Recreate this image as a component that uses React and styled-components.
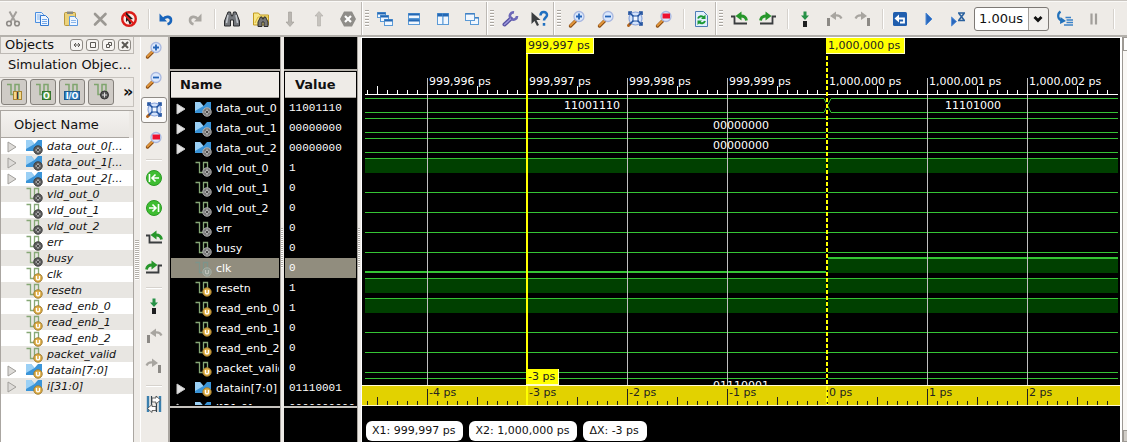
import React from "react";
import styled, { createGlobalStyle, css } from "styled-components";

const Global = createGlobalStyle`
  * { box-sizing: border-box; }
  body { margin: 0; background: #eeebe7; color: #111; font: 11px/16px "DejaVu Sans", sans-serif; }
  button { padding: 0; border: 0; background: none; font: inherit; color: inherit; }
  ul { list-style: none; margin: 0; padding: 0; }
  h2, h3 { margin: 0; font-weight: normal; }
  svg { display: block; flex: none; }
`;

const Window = styled.div`
  display: flex;
  flex-direction: column;
  height: 100vh;
  overflow: hidden;
`;

/* ---------- toolbars ---------- */
const Toolbar = styled.header`
  display: flex;
  flex: none;
  height: 37px;
  padding-top: 1px;
  border-bottom: 2px solid #b4b1ac;
  box-shadow: inset 0 1px #c9c5c0, inset 0 2px #faf9f7;
`;
const Group = styled.div`
  display: flex;
  align-items: center;
  gap: 3px;
  margin-top: 1px;
  ${(p) => p.$grip && css`
    border-left: 1px solid #bdb9b4;
    padding: 0 1px 0 3px;
    box-shadow: inset 1px 0 #fff;
  `}
`;
const Grip = styled.span`
  width: 4px;
  height: 18px;
  background: repeating-linear-gradient(#aaa6a0 0 1px, #fff 1px 2px, #eeebe7 2px 3px);
`;
const ToolButton = styled.button`
  display: grid;
  place-items: center;
  flex: none;
  width: 26px;
  height: 26px;
  border: 1px solid transparent;
  border-radius: 3px;
  ${(p) => p.$active && css`
    background: #fbfaf9;
    border-color: #8f8b86;
  `}
`;
const Separator = styled.span`
  flex: none;
  ${(p) => p.$row
    ? css`width: 16px; height: 4px; border-bottom: 1px solid #fff; box-shadow: inset 0 -1px #d6d2cd;`
    : css`width: 5px; height: 20px; border-right: 1px solid #fff; box-shadow: inset -1px 0 #d6d2cd;`}
`;
const Combo = styled.div`
  display: grid;
  width: 75px;
  height: 24px;
`;
const ComboSelect = styled.select`
  grid-area: 1 / 1;
  appearance: none;
  width: 100%;
  padding: 0 4px;
  border: 1px solid #7d7975;
  border-radius: 3px;
  background: linear-gradient(to right, #fff 53px, #a5a19c 53px 54px, #f1efec 54px);
  font: 13px/20px "DejaVu Sans", sans-serif;
  color: #111;
`;
const ComboArrow = styled.svg`
  grid-area: 1 / 1;
  place-self: center end;
  margin-right: 6px;
  pointer-events: none;
`;

/* ---------- body ---------- */
const Body = styled.main`
  display: flex;
  flex: 1;
  min-height: 0;
`;
const Dock = styled.aside`
  display: flex;
  flex-direction: column;
  flex: none;
  width: 134px;
`;
const DockTitle = styled.div`
  display: flex;
  align-items: center;
  gap: 3px;
  height: 17px;
  padding: 0 2px 0 4px;
  border: 1px solid #bdb9b4;
  border-top: 0;
`;
const DockHeading = styled.h2`
  flex: 1;
  font-size: 13px;
  line-height: 16px;
`;
const SmallButton = styled.button`
  display: grid;
  place-items: center;
  width: 13px;
  height: 12px;
  border: 1px solid #8d8984;
  border-radius: 3px;
  background: #f6f4f2;
`;
const SubHeading = styled.h3`
  padding: 2px 2px 2px 8px;
  height: 23px;
  font-size: 13px;
  line-height: 18px;
  white-space: nowrap;
`;
const Filters = styled.div`
  display: flex;
  align-items: center;
  gap: 3px;
  height: 30px;
  padding: 0 1px;
  border: 1px solid #c6c2bd;
  border-left: 0;
`;
const FilterButton = styled(ToolButton)`
  background: #cfcbc6;
  border-color: #85817c;
`;
const More = styled.button`
  flex: 1;
  padding-left: 6px;
  font-size: 16px;
  font-weight: bold;
  line-height: 20px;
`;
const ObjectBox = styled.div`
  display: flex;
  flex-direction: column;
  flex: 1;
  min-height: 0;
  margin-top: 3px;
  border: 1px solid #aaa6a1;
  border-bottom: 0;
  background: #fff;
`;
const ObjectHeader = styled.div`
  height: 27px;
  margin-right: 4px;
  padding: 0 13px;
  border-bottom: 1px solid #aaa6a1;
  background: linear-gradient(#f4f2ef, #e9e6e2);
  box-shadow: 4px 0 #ece9e5, 1px 0 #c6c2bd;
  font-size: 13px;
  line-height: 27px;
`;
const ObjectRow = styled.li`
  display: grid;
  grid-template-columns: 14px 18px 1fr;
  align-items: center;
  column-gap: 4px;
  height: 16px;
  padding-left: 6px;
  white-space: nowrap;
  font-style: italic;
  &:nth-child(even) { background: #e8e6e2; }
`;
const Splitter = styled.div`
  display: grid;
  place-items: center;
  flex: none;
  width: ${(p) => p.$w}px;
  background: linear-gradient(to right, #a9a5a0 1px, #eeebe7 1px);
  ${(p) => p.$plain && css`background: #eeebe7;`}
`;
const SplitGrip = styled.span`
  width: ${(p) => p.$w}px;
  height: 40px;
  margin-top: ${(p) => p.$drop || 0}px;
  background: repeating-linear-gradient(#b3afa9 0 1px, #fff 1px 2px);
`;
const SideBar = styled.nav`
  display: flex;
  flex-direction: column;
  align-items: center;
  gap: 4px;
  flex: none;
  width: 29px;
  padding: 0 1px 0 0;
  border-left: 1px solid #fff;
  border-right: 1px solid #a9a5a0;
`;

/* ---------- signal columns ---------- */
const Column = styled.section`
  display: flex;
  flex-direction: column;
  flex: none;
  width: ${(p) => p.$w}px;
  background: #000;
  color: #fff;
`;
const ColumnTop = styled.div`
  flex: none;
  height: 34px;
  border-bottom: 2px solid #b4b0aa;
`;
const ColumnHeader = styled.div`
  flex: none;
  height: 26px;
  margin: 1px 1px 0;
  padding-left: ${(p) => p.$pad}px;
  border-bottom: 1px solid #aaa6a1;
  background: #eeebe7;
  color: #111;
  font-size: 13px;
  font-weight: bold;
  line-height: 26px;
`;
const SignalList = styled.ul`
  flex: 1;
  min-height: 0;
  margin: 0 1px 1px;
  overflow: hidden;
`;
const ColumnFoot = styled.div`
  flex: none;
  height: 36px;
  border-top: 2px solid #c6c3be;
`;
const SignalRow = styled.li`
  display: grid;
  grid-template-columns: 14px 18px 1fr;
  align-items: center;
  column-gap: 4px;
  height: 20px;
  padding: 1px 0 0 5px;
  white-space: nowrap;
  background: ${(p) => (p.$selected ? "#918d7e" : "transparent")};
`;
const ValueRow = styled.li`
  height: 20px;
  padding-left: 4px;
  white-space: nowrap;
  font: 11px/20px "Liberation Mono", monospace;
  background: ${(p) => (p.$selected ? "#918d7e" : "transparent")};
`;

/* ---------- wave view ---------- */
const Wave = styled.section`
  display: flex;
  flex-direction: column;
  flex: 1;
  min-width: 0;
  border: 1px solid #fff;
  border-width: 1px 2px 0 1px;
  background: #000;
`;
const Plot = styled.svg`
  flex: 1;
  min-height: 0;
  width: calc(100% - 5px);
  margin-left: 3px;
  overflow: hidden;
`;
const Ruler = styled.div`
  flex: none;
  height: 21px;
  padding: 0 2px 0 3px;
  border: 1px solid #fffbd0;
  border-width: 1px 0;
  background: #e2d200;
`;
const Pills = styled.footer`
  display: flex;
  flex: none;
  gap: 6px;
  height: 36px;
  padding: 15px 4px 1px;
`;
const Pill = styled.output`
  padding: 0 8px 0 6px;
  border-radius: 6px;
  background: #fff;
  color: #111;
  line-height: 20px;
  white-space: nowrap;
`;
const ScrollBar = styled.div`
  display: flex;
  flex-direction: column;
  justify-content: space-between;
  flex: none;
  width: 5px;
  border-left: 1px solid #9d9994;
  background: #faf8f5;
`;
const ScrollButton = styled.button`
  height: ${(p) => p.$h}px;
  border: 1px solid #9d9994;
  border-right: 0;
  background: ${(p) => p.$bg};
`;

/* ---------- icons ---------- */
const Svg = ({ s = 20, children }) => (
  <svg width={s} height={s} viewBox="0 0 20 20" fill="none" aria-hidden="true">{children}</svg>
);
const Lens = ({ children }) => (
  <Svg>
    <path d="M9 11.5 3.5 17" stroke="#8a4a10" strokeWidth="3.4" strokeLinecap="round" />
    <path d="M8.5 11.5 3.5 16.5" stroke="#e2973c" strokeWidth="1.8" strokeLinecap="round" />
    <circle cx="12" cy="7.5" r="5" fill="#dce8fc" stroke="#a9b8e0" strokeWidth="1.3" />
    {children}
  </Svg>
);
const Pane = ({ x, y, w, h, bar = 2 }) => (
  <>
    <rect x={x} y={y} width={w} height={h} fill="#f1f7fe" stroke="#5b9ad6" />
    <rect x={x} y={y} width={w} height={bar} fill="#2468b4" />
  </>
);
const Icons = {
  cut: <Svg><path d="M6.5 2.5 12.5 13M13.5 2.5 7.5 13" stroke="#a3a09c" strokeWidth="2" /><circle cx="6" cy="14.5" r="2.3" stroke="#8d8a86" strokeWidth="1.6" /><circle cx="14" cy="14.5" r="2.3" stroke="#8d8a86" strokeWidth="1.6" /></Svg>,
  copy: <Svg><path d="M3.5 3.5h6l2 2v8h-8z" fill="#e6f0fd" stroke="#4a8ee0" /><path d="M5 6h4M5 8h4M5 10h3" stroke="#8ab6ea" /><path d="M8.5 6.500h5l3 3v7h-8z" fill="#eff6ff" stroke="#3378d0" /><path d="M10 10.5h5M10 12.5h5M10 14.5h5" stroke="#73a7e8" /></Svg>,
  paste: <Svg><rect x="3.5" y="3.5" width="11" height="13" rx="1" fill="#ecd27a" stroke="#b8973c" /><rect x="6" y="2.5" width="6" height="2.5" fill="#8a8a80" /><path d="M8.5 7.5h5l3 3v6h-8z" fill="#eff6ff" stroke="#5b98e0" /><path d="M10 11.5h5M10 13.5h5" stroke="#8ab6ea" /></Svg>,
  remove: <Svg><path d="m5 5 10.5 10.5M15.5 5 5 15.5" stroke="#9b9893" strokeWidth="2.6" strokeLinecap="round" /></Svg>,
  deny: <Svg><circle cx="10" cy="10" r="6.8" fill="#fbe9e6" stroke="#dc1c18" strokeWidth="2.4" /><path d="m7 3 7 7-3 .5 1.5 4-2 .8-1.500-4L7 13z" fill="#1b1b1b" /><path d="m5 5 10 10" stroke="#dc1c18" strokeWidth="2" /></Svg>,
  undo: <Svg><path d="M7 10c3-3.5 8-2.5 8 1.2 0 2-1 3.3-3.5 4" stroke="#1864bb" strokeWidth="2.6" /><path d="M3.5 4.500v8H11z" fill="#1864bb" /></Svg>,
  redo: <Svg><path d="M13 10c-3-3.5-8-2.5-8 1.2 0 2 1 3.3 3.5 4" stroke="#aaa7a2" strokeWidth="2.6" /><path d="M16.5 4.500v8H9z" fill="#aaa7a2" /></Svg>,
  find: <Svg><path d="M6 3h2.5l1 4h1l1-4H14l3.5 9v5h-6v-6h-3v6h-6v-5z" fill="#74777c" stroke="#2b2c2e" /><path d="M6 6 4.5 14M14 6l1.5 8" stroke="#c4c8ce" strokeWidth="1.5" /></Svg>,
  findFiles: <Svg><path d="M2.5 16V4h5l1.5 2h8.500v10z" fill="#f8e686" stroke="#c29b20" /><path d="M4 14 7 8h10" stroke="#d9b63c" /><path d="m9.500 8-2.500 5v4.500h4V13h2v4.500h4V13L14.500 8H13l-.5 2h-1L11 8z" fill="#777" stroke="#2c2c2c" /></Svg>,
  down: <Svg><path d="M8.5 3h3v10H14l-4 4.500L6 13h2.500z" fill="#b9b6b1" stroke="#9d9a95" strokeWidth=".6" /></Svg>,
  up: <Svg><path d="M8.5 17h3V7H14l-4-4.500L6 7h2.500z" fill="#c6c3be" stroke="#b0ada8" strokeWidth=".6" /></Svg>,
  stop: <Svg><path d="M6 2.500h8l4 7.500-4 7.500H6L2 10z" fill="#8f8d89" /><path d="m7 7 6 6m0-6-6 6" stroke="#fff" strokeWidth="2.2" /></Svg>,
  cascade: <Svg><Pane x={2.5} y={3.5} w={8} h={5} /><Pane x={5.5} y={6.5} w={8} h={6} /><Pane x={9.5} y={10.5} w={8} h={6} /></Svg>,
  tileH: <Svg><Pane x={4.5} y={4.500} w={11} h={5} /><Pane x={4.5} y={10.5} w={11} h={5} /></Svg>,
  tileV: <Svg><Pane x={4.5} y={4.5} w={5.5} h={11} bar={3} /><Pane x={10} y={4.5} w={5.5} h={11} bar={3} /></Svg>,
  layers: <Svg><Pane x={8.500} y={8.5} w={8} h={7} bar={1} /><Pane x={3.5} y={4.5} w={9} h={7} bar={1} /></Svg>,
  wrench: <Svg><path d="m4.500 15.500 6.500-6" stroke="#5550a0" strokeWidth="4" strokeLinecap="round" /><path d="M11 9.500a3.500 3.500 0 0 1 3-6M11.500 10a3.500 3.500 0 0 0 5.500-3" stroke="#6d68b8" strokeWidth="2.6" /><path d="m4.500 15.500 6-5.500" stroke="#9c98dc" strokeWidth="1.5" strokeLinecap="round" /></Svg>,
  help: <Svg><path d="M2.500 3v12l3-3 2.500 5 2-1-2.500-5h4z" fill="#3b3e40" /><path d="M11.500 6.500c0-4.500 6.500-4.500 6.500-.5 0 2.500-3 2.500-3 5.500M15 14v2.800" stroke="#2070c0" strokeWidth="2.500" /></Svg>,
  zoomIn: <Lens><path d="M12 4.500v6M9 7.500h6" stroke="#2464b8" strokeWidth="1.8" /></Lens>,
  zoomOut: <Lens><path d="M9 7.500h6" stroke="#2464b8" strokeWidth="1.8" /></Lens>,
  zoomSel: <Lens><rect x="8.500" y="4.500" width="7.500" height="5" fill="#ee1030" /></Lens>,
  zoomFit: <Svg><path d="M6.500 13.500 3.500 16.500" stroke="#b5651d" strokeWidth="3" strokeLinecap="round" /><circle cx="10.500" cy="9.500" r="6.500" fill="#d5e4fb" stroke="#8aa5dc" strokeWidth="1.2" /><path d="m4.500 3.500 12 12m0-12-12 12" stroke="#1d4f9e" strokeWidth="1.500" /><path d="M4 6V3h3M14 3h3v3M17 13v3h-3" stroke="#1d4f9e" strokeWidth="1.600" /><rect x="8" y="7" width="5" height="5" fill="#f3f8ff" stroke="#1d4f9e" /></Svg>,
  refresh: <Svg><path d="M4.500 2.500h8l4 4v11h-12z" fill="#e2effc" stroke="#4e7db5" /><path d="M7 9.500c1-2.500 4-3 6-1M14 12c-1 2.500-4 3-6 1" stroke="#1d9a35" strokeWidth="2" /><path d="M14.500 5.500v4.500H10zM6.500 16v-4.500H11z" fill="#1d9a35" /></Svg>,
  prevEdge: <Svg><path d="M2 7.500h3.500v7H18" stroke="#3a3d3f" strokeWidth="1.8" /><path d="M17.500 11.500c-.5-3.500-3-4.500-5.500-4.500" stroke="#27962b" strokeWidth="2.800" /><path d="m12.500 2.500-6 4.500 6 4.500z" fill="#27962b" /></Svg>,
  nextEdge: <Svg><path d="M2 14.500h12.500v-7H18" stroke="#3a3d3f" strokeWidth="1.8" /><path d="M2.500 11.500C3 8 5 7 8 7" stroke="#27962b" strokeWidth="2.800" /><path d="m7.500 2.500 6 4.500-6 4.500z" fill="#27962b" /></Svg>,
  marker: <Svg><path d="M8.500 2.500h3v4H14L10 11 6 6.500h2.500z" fill="#279247" /><rect x="8" y="12" width="4" height="6" fill="#1e1f20" /></Svg>,
  prevMarker: <Svg><path d="M17.500 9.500C16.500 7 14 6 11 6.500" stroke="#a8a5a0" strokeWidth="2.2" /><path d="m12 2.500-6 4.500 6 4z" fill="#a8a5a0" /><rect x="3" y="9" width="3" height="8" fill="#8c8985" /></Svg>,
  nextMarker: <Svg><path d="M2.500 9.500C3.500 7 6 6 9 6.500" stroke="#a8a5a0" strokeWidth="2.2" /><path d="m8 2.500 6 4.500-6 4z" fill="#a8a5a0" /><rect x="14" y="9" width="3" height="8" fill="#8c8985" /></Svg>,
  restart: <Svg><rect x="3" y="3" width="14" height="14" rx="1.5" fill="#205eae" /><path d="M8 9.500h6v4h-4" stroke="#fff" strokeWidth="1.8" /><path d="M9 5.500v8L4.500 9.500z" fill="#fff" /></Svg>,
  play: <Svg><path d="M7 4v12l6-6z" fill="#2a68bd" stroke="#4c88d4" /></Svg>,
  runFor: <Svg><path d="M3.500 8v9l5-4.500z" fill="#2a68bd" stroke="#5a90d6" /><path d="M10 4h7M10 11.500h7M11 4.500l5 6.500M16 4.500 11 11" stroke="#2a619e" strokeWidth="1.6" /></Svg>,
  step: <Svg><path d="M5.500 2.500C2 5 2.500 10 6.500 11.500" stroke="#2271bb" strokeWidth="2.2" /><path d="m5.500 8 5.500 4-6 3z" fill="#2271bb" /><path d="M10.500 8.500H16M11.500 11H18M11.500 13.500H18M9 16h9" stroke="#3c82c8" strokeWidth="1.3" /></Svg>,
  pause: <Svg><path d="M7.500 4.500v11M12 4.500v11" stroke="#a29f9b" strokeWidth="2.200" /></Svg>,
  first: <Svg><circle cx="10" cy="10" r="7.500" fill="#3fbd32" stroke="#299a23" /><path d="M5.500 6v8M15 10H8m3.500-3.500L8 10l3.500 3.500" stroke="#fff" strokeWidth="1.6" /></Svg>,
  last: <Svg><circle cx="10" cy="10" r="7.500" fill="#3fbd32" stroke="#299a23" /><path d="M14.500 6v8M5 10h7M8.500 6.500 12 10l-3.500 3.500" stroke="#fff" strokeWidth="1.6" /></Svg>,
  swap: <Svg><path d="M4 2v16M16 2v16" stroke="#3a7fae" strokeWidth="2.400" /><path d="M7.500 2v16M12.500 2v16" stroke="#2f4250" strokeWidth="1.200" /><path d="M8 4h4V2l4.500 4-4.500 4V8H8zM12 12.500H8v-2l-4.500 4 4.500 4v-2h4z" fill="#fff" stroke="#444" strokeWidth=".8" /></Svg>,
};

const Badge = ({ kind }) =>
  kind === "u" ? (
    <>
      <circle cx="13" cy="12" r="4.200" fill="#e0b04a" stroke="#a07b2c" />
      <path d="M11.500 10v2.500c0 1.800 3 1.800 3 0V10" stroke="#fff" strokeWidth="1.300" />
    </>
  ) : (
    <>
      <circle cx="13" cy="12" r="4.200" fill={kind === "light" ? "#777" : "#5c5c5c"} stroke={kind === "light" ? "#b5b5b5" : "#3c3c3c"} />
      <path d="M13 9.500v5M10.500 12h5" stroke="#d8d8d8" strokeWidth="1.200" />
      <circle cx="13" cy="12" r="1" fill="#222" />
    </>
  );
const SignalIcon = ({ bus, kind, selected }) => (
  <svg width="18" height="18" viewBox="0 0 18 18" fill="none" opacity={selected ? 0.6 : 1} aria-hidden="true">
    {bus ? (
      <>
        <path d="M1 2h5l3.500 4L13 2h4v11H1z" fill="#3a94d8" />
        <path d="M1 2h5l3.500 4L1 11z" fill="#9bd0f5" />
      </>
    ) : (
      <path d="M1.500 2.500h4v10h4v-10h4v6" stroke={selected ? "#6f9a95" : "#86a876"} strokeWidth="1.300" />
    )}
    {selected ? (
      <>
        <circle cx="13" cy="12" r="4.200" fill="#8fa39c" stroke="#b9c8c0" />
        <path d="M11.500 10v2.500c0 1.800 3 1.800 3 0V10" stroke="#dfe8e2" strokeWidth="1.300" />
      </>
    ) : (
      <Badge kind={kind} />
    )}
  </svg>
);
const Expander = ({ dark }) => (
  <svg width="10" height="12" viewBox="0 0 10 12" fill={dark ? "#e4e4e4" : "#dddbd8"} aria-hidden="true">
    <path d="M1 1v10l8-5z" stroke={dark ? "#c8c8c8" : "#a19f9b"} />
  </svg>
);
const FilterIcon = ({ label, color, edge }) => (
  <svg width="22" height="22" viewBox="0 0 22 22" fill="none" aria-hidden="true">
    <path d="M4 3.500h4v10h4v-10h4v8" stroke="#7fa56e" strokeWidth="1.500" />
    {label ? (
      <>
        <rect x={label.length > 1 ? 3.5 : 10.5} y="10.5" width={label.length > 1 ? 15 : 8} height="8" fill={color} stroke={edge} />
        <text x={label.length > 1 ? 11 : 14.5} y="18" textAnchor="middle" fontSize="8" fontWeight="bold" fill={label === "I" ? "#333" : "#fff"}>{label}</text>
      </>
    ) : (
      <>
        <circle cx="14.500" cy="14" r="4" fill="#555" stroke="#333" />
        <path d="M14.500 11.500v5M12 14h5" stroke="#ddd" />
      </>
    )}
  </svg>
);

/* ---------- data ---------- */
const signals = [
  { name: "data_out_0", full: "data_out_0[...", bus: true, kind: "out", value: "11001110" },
  { name: "data_out_1", full: "data_out_1[...", bus: true, kind: "out", value: "00000000" },
  { name: "data_out_2", full: "data_out_2[...", bus: true, kind: "out", value: "00000000" },
  { name: "vld_out_0", kind: "out", value: "1" },
  { name: "vld_out_1", kind: "out", value: "0" },
  { name: "vld_out_2", kind: "out", value: "0" },
  { name: "err", kind: "out", value: "0" },
  { name: "busy", kind: "out", value: "0" },
  { name: "clk", kind: "u", value: "0", selected: true },
  { name: "resetn", kind: "u", value: "1" },
  { name: "read_enb_0", kind: "u", value: "1" },
  { name: "read_enb_1", kind: "u", value: "0" },
  { name: "read_enb_2", kind: "u", value: "0" },
  { name: "packet_valid", kind: "u", value: "0" },
  { name: "datain[7:0]", bus: true, kind: "u", value: "01110001" },
  { name: "i[31:0]", bus: true, kind: "u", value: "00000000000000" },
];

const toolGroups = [
  ["cut", "copy", "paste", "remove", "deny", "|", "undo", "redo", "|", "find", "findFiles", "down", "up", "stop"],
  ["cascade", "tileH", "tileV", "layers"],
  ["wrench", "help"],
  ["zoomIn", "zoomOut", "zoomFit", "zoomSel", "|", "refresh"],
  ["prevEdge", "nextEdge", "|", "marker", "prevMarker", "nextMarker", "|", "restart", "play", "runFor", "combo", "step", "pause", "|"],
];
const sideTools = ["zoomIn", "zoomOut", "zoomFit", "zoomSel", "|", "first", "last", "prevEdge", "nextEdge", "|", "marker", "prevMarker", "nextMarker", "|", "swap"];

const ToolItem = ({ id, row }) => {
  if (id === "|") return <Separator $row={row} />;
  if (id === "combo")
    return (
      <Combo>
        <ComboSelect aria-label="Run time" defaultValue="1.00us">
          <option>1.00us</option>
        </ComboSelect>
        <ComboArrow width="10" height="8" viewBox="0 0 10 8" fill="none">
          <path d="m1.500 2 3.500 3.500L8.500 2" stroke="#111" strokeWidth="2.800" />
        </ComboArrow>
      </Combo>
    );
  return <ToolButton type="button" aria-label={id} $active={row && id === "zoomFit"}>{Icons[id]}</ToolButton>;
};

/* ---------- waveform ---------- */
const PX_PER_PS = 100;
const FIRST_GRID = 62;
const ROW0 = 60;
const LINE = "#35c435";
const FILL = "#004000";
const CURSOR_1 = 162;
const CURSOR_2 = 462;
const times = ["999,996 ps", "999,997 ps", "999,998 ps", "999,999 ps", "1,000,000 ps", "1,000,001 ps", "1,000,002 ps"];
const offsets = ["-4 ps", "-3 ps", "-2 ps", "-1 ps", "0 ps", "1 ps", "2 ps"];
const gridX = times.map((_, i) => FIRST_GRID + i * PX_PER_PS);
const ticks = Array.from({ length: 75 }, (_, i) => 2 + i * 10);

const HLine = ({ y, x = 0, w = "100%", h = 1 }) => <rect x={x} y={y} width={w} height={h} fill={LINE} />;

function Trace({ signal, index }) {
  const y = ROW0 + index * 20;
  if (index === 0)
    return (
      <>
        <HLine y={y} w={459} />
        <HLine y={y + 14} w={459} />
        <HLine y={y} x={466} />
        <HLine y={y + 14} x={466} />
        <path d={`M459 ${y + 0.5} 466 ${y + 14.5}M466 ${y + 0.5} 459 ${y + 14.5}`} stroke={LINE} />
      </>
    );
  if (signal.bus) return <><HLine y={y} /><HLine y={y + 14} /></>;
  if (signal.selected)
    return (
      <>
        <rect x={CURSOR_2} y={y} width="100%" height="15" fill={FILL} />
        <HLine y={y + 13} w={CURSOR_2} h={2} />
        <HLine y={y - 1} x={CURSOR_2} h={2} />
        <HLine y={y} x={CURSOR_2 - 1} w={2} h={14} />
      </>
    );
  if (signal.value === "1")
    return (
      <>
        <rect y={y} width="100%" height="15" fill={FILL} />
        <HLine y={y} />
      </>
    );
  return <HLine y={y + 14} />;
}

const Tag = ({ x, y, w, h, children }) => (
  <>
    <rect x={x - 1} y={y} width={w} height={h} fill="#ffffc8" />
    <rect x={x - 1} y={y} width={w - 1} height={h - 1} fill="#ffff00" />
    <text x={x + 1} y={y + 11} fill="#222">{children}</text>
  </>
);

const WavePlot = () => (
  <Plot fontSize="11" fill="#fff" role="img" aria-label="Waveforms">
    {signals.map((s, i) => <Trace key={s.name} signal={s} index={i} />)}
    {gridX.map((x) => <rect key={x} x={x} y="40" width="1" height="100%" fill="#c0c0c0" />)}
    {ticks.map((x) => {
      const tall = (x - 12) % 100 === 0;
      return <rect key={x} x={x} y={tall ? 48 : 52} width="1" height={tall ? 8 : 4} />;
    })}
    <rect y="56" width="100%" height="1" />
    {times.map((t, i) => <text key={t} x={gridX[i] + 2} y="47">{t}</text>)}
    <text x="199" y="71">11001110</text>
    <text x="580" y="71">11101000</text>
    <text x="348" y="91">00000000</text>
    <text x="348" y="111">00000000</text>
    <text x="348" y="351">01110001</text>
    <rect x={CURSOR_1 - 1} width="2" height="100%" fill="#ffff00" />
    <rect x={CURSOR_2 - 1} width="2" height="100%" fill="#000" />
    <line x1={CURSOR_2} x2={CURSOR_2} y1="0" y2="1000" stroke="#ffff00" strokeWidth="2" strokeDasharray="4 2" />
    <Tag x={CURSOR_1} y={0} w={68} h={16}>999,997 ps</Tag>
    <Tag x={CURSOR_2} y={0} w={79} h={16}>1,000,000 ps</Tag>
    <Tag x={CURSOR_1} y={331} w={33} h={16}>-3 ps</Tag>
  </Plot>
);

const OffsetRuler = () => (
  <Ruler>
    <svg width="100%" height="19" fontSize="11" fill="#222">
      {ticks.map((x) => {
        const major = (x - FIRST_GRID) % 100 === 0;
        const top = major ? 3 : (x - 12) % 100 === 0 ? 11 : 15;
        return <rect key={x} x={x} y={top} width="1" height={19 - top} />;
      })}
      {offsets.map((t, i) => <text key={t} x={gridX[i] + 2} y="10">{t}</text>)}
      <rect x={CURSOR_1 - 1} width="2" height="19" fill="#ffff00" />
      <line x1={CURSOR_2} x2={CURSOR_2} y1="0" y2="19" stroke="#ffff00" strokeWidth="2" strokeDasharray="4 2" />
    </svg>
  </Ruler>
);

export default function App() {
  return (
    <Window>
      <Global />
      <Toolbar>
        {toolGroups.map((group, g) => (
          <Group key={g} $grip={g > 0}>
            {g > 0 && <Grip />}
            {group.map((id, i) => <ToolItem key={i} id={id} />)}
          </Group>
        ))}
      </Toolbar>
      <Body>
        <Dock>
          <DockTitle>
            <DockHeading>Objects</DockHeading>
            {["M2 5h6M4 3 2 5l2 2M6 3l2 2-2 2", "M2.500 2.500h5v5h-5z", "M2.500 4.500h3v3h-3zM4.500 4V2.500h3v3H6", "m2 2 6 6m0-6-6 6"].map((d, i) => (
              <SmallButton key={i} type="button" aria-label={["Slide", "Maximize", "Float", "Close"][i]}>
                <svg width="10" height="10" viewBox="0 0 10 10" fill="none" stroke="#5b5854" strokeWidth={i === 3 ? 2 : 1}><path d={d} /></svg>
              </SmallButton>
            ))}
          </DockTitle>
          <SubHeading>Simulation Objec...</SubHeading>
          <Filters>
            <FilterButton type="button" aria-label="Inputs"><FilterIcon label="I" color="#f5d98a" edge="#a98532" /></FilterButton>
            <FilterButton type="button" aria-label="Outputs"><FilterIcon label="O" color="#4f9d45" edge="#35752f" /></FilterButton>
            <FilterButton type="button" aria-label="Bidirectional"><FilterIcon label="I/O" color="#2e7fc0" edge="#1e5b90" /></FilterButton>
            <FilterButton type="button" aria-label="Internal"><FilterIcon /></FilterButton>
            <More type="button">»</More>
          </Filters>
          <ObjectBox>
            <ObjectHeader>Object Name</ObjectHeader>
            <ul>
              {signals.map((s) => (
                <ObjectRow key={s.name}>
                  <span>{s.bus && <Expander />}</span>
                  <SignalIcon bus={s.bus} kind={s.kind} />
                  {s.full || s.name}
                </ObjectRow>
              ))}
            </ul>
          </ObjectBox>
        </Dock>
        <Splitter $w={6} $plain><SplitGrip $w={4} $drop={40} /></Splitter>
        <SideBar>
          {sideTools.map((id, i) => <ToolItem key={i} id={id} row />)}
        </SideBar>
        <Splitter $w={1} />
        <Column $w={110}>
          <ColumnTop />
          <ColumnHeader $pad={9}>Name</ColumnHeader>
          <SignalList>
            {signals.map((s) => (
              <SignalRow key={s.name} $selected={s.selected}>
                <span>{s.bus && <Expander dark />}</span>
                <SignalIcon bus={s.bus} kind={s.kind === "out" ? "light" : s.kind} selected={s.selected} />
                {s.name}
              </SignalRow>
            ))}
          </SignalList>
          <ColumnFoot />
        </Column>
        <Splitter $w={4}><SplitGrip $w={2} $drop={16} /></Splitter>
        <Column $w={73}>
          <ColumnTop />
          <ColumnHeader $pad={10}>Value</ColumnHeader>
          <SignalList>
            {signals.map((s) => <ValueRow key={s.name} $selected={s.selected}>{s.value}</ValueRow>)}
          </SignalList>
          <ColumnFoot />
        </Column>
        <Splitter $w={4}><SplitGrip $w={2} $drop={16} /></Splitter>
        <Wave>
          <WavePlot />
          <OffsetRuler />
          <Pills>
            <Pill>X1: 999,997 ps</Pill>
            <Pill>X2: 1,000,000 ps</Pill>
            <Pill>ΔX: -3 ps</Pill>
          </Pills>
        </Wave>
        <ScrollBar>
          <ScrollButton type="button" aria-label="Scroll up" $h={14} $bg="#fff" />
          <ScrollButton type="button" aria-label="Scroll down" $h={12} $bg="#d0ccc6" />
        </ScrollBar>
      </Body>
    </Window>
  );
}
